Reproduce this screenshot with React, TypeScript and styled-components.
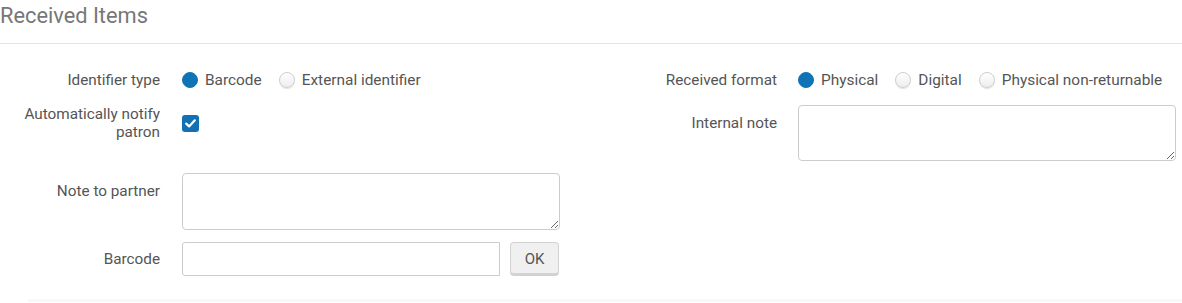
import styled, { createGlobalStyle } from "styled-components";

const GlobalStyle = createGlobalStyle`
  html, body {
    margin: 0;
    padding: 0;
    background: #ffffff;
  }
  body {
    font-family: Roboto, "Liberation Sans", Arial, sans-serif;
    color: #555555;
  }
`;

const Page = styled.div`
  width: 1182px;
  height: 303px;
  overflow: hidden;
`;

const Header = styled.header`
  height: 43px;
  border-bottom: 1px solid #e3e3e3;
  display: flex;
  align-items: center;
`;

const Title = styled.h2`
  margin: 0;
  margin-top: -12px;
  font-size: 21.8px;
  font-weight: 400;
  color: #777777;
`;

const Body = styled.div`
  display: flex;
  padding-top: 19px;
  height: 236px;
`;

const Column = styled.div<{ $width?: number; $label: number; $gap: number }>`
  width: ${({ $width }) => ($width ? `${$width}px` : "auto")};
  flex: ${({ $width }) => ($width ? "none" : "1")};
  display: flex;
  flex-direction: column;
  --label: ${({ $label }) => $label}px;
  --gap: ${({ $gap }) => $gap}px;
`;

const Row = styled.div<{ $top?: number; $align?: string }>`
  display: flex;
  align-items: ${({ $align }) => $align || "center"};
  margin-top: ${({ $top }) => $top || 0}px;
  min-height: 34px;
`;

const Label = styled.label<{ $pad?: number }>`
  width: var(--label);
  flex: none;
  margin-right: var(--gap);
  text-align: right;
  font-size: 15.3px;
  line-height: 18px;
  color: #555555;
  padding-top: ${({ $pad }) => $pad || 0}px;
`;

const RadioGroup = styled.div`
  display: flex;
  align-items: center;
  gap: 17px;
`;

const RadioItem = styled.span`
  display: inline-flex;
  align-items: center;
  gap: 7px;
  font-size: 15.4px;
  color: #555555;
`;

const RadioDot = styled.span<{ $on?: boolean }>`
  width: 16px;
  height: 16px;
  border-radius: 50%;
  box-sizing: border-box;
  background: ${({ $on }) =>
    $on ? "#0f74b6" : "linear-gradient(#ffffff, #ededed)"};
  border: 1px solid ${({ $on }) => ($on ? "#0f74b6" : "#cfcfcf")};
  box-shadow: ${({ $on }) => ($on ? "none" : "0 1px 1px rgba(0,0,0,0.12)")};
`;

const CheckBox = styled.span`
  width: 17px;
  height: 17px;
  border-radius: 3px;
  background: #1270b3;
  display: inline-flex;
  align-items: center;
  justify-content: center;
`;

const TextArea = styled.textarea<{ $width: number; $height: number }>`
  width: ${({ $width }) => $width}px;
  height: ${({ $height }) => $height}px;
  box-sizing: border-box;
  border: 1px solid #cccccc;
  border-radius: 4px;
  margin: 0;
  padding: 6px;
  font-family: inherit;
  font-size: 14px;
  resize: vertical;
  outline: none;
`;

const InputGroup = styled.div`
  display: flex;
  align-items: stretch;
  gap: 10px;
`;

const TextInput = styled.input`
  width: 318px;
  height: 34px;
  box-sizing: border-box;
  border: 1px solid #cccccc;
  border-radius: 3px 0 0 3px;
  margin: 0;
  padding: 0 8px;
  font-family: inherit;
  font-size: 14px;
  outline: none;
`;

const Button = styled.button`
  width: 49px;
  height: 34px;
  box-sizing: border-box;
  margin: 0;
  border: 1px solid #d2d2d2;
  border-bottom: 3px solid #d2d2d2;
  border-radius: 4px;
  background: #f0f0f0;
  color: #555555;
  font-family: inherit;
  font-size: 15px;
  padding: 1px 0 0;
`;

const Footer = styled.div`
  margin-left: 28px;
  height: 3px;
  background: #f8f8f8;
`;

const Check = () => (
  <svg width="11" height="9" viewBox="0 0 11 9">
    <path
      d="M1.2 4.6 L4.1 7.4 L9.8 1.3"
      fill="none"
      stroke="#ffffff"
      strokeWidth="2.2"
      strokeLinecap="round"
      strokeLinejoin="round"
    />
  </svg>
);

const Radio = ({ label, on }: { label: string; on?: boolean }) => (
  <RadioItem>
    <RadioDot $on={on} />
    {label}
  </RadioItem>
);

export default function App() {
  return (
    <Page>
      <GlobalStyle />
      <Header>
        <Title>Received Items</Title>
      </Header>
      <Body>
        <Column $width={591} $label={160} $gap={22}>
          <Row>
            <Label>Identifier type</Label>
            <RadioGroup>
              <Radio label="Barcode" on />
              <Radio label="External identifier" />
            </RadioGroup>
          </Row>
          <Row $top={8}>
            <Label>Automatically notify patron</Label>
            <CheckBox>
              <Check />
            </CheckBox>
          </Row>
          <Row $top={32} $align="flex-start">
            <Label $pad={9}>Note to partner</Label>
            <TextArea $width={378} $height={57} />
          </Row>
          <Row $top={12}>
            <Label>Barcode</Label>
            <InputGroup>
              <TextInput />
              <Button>OK</Button>
            </InputGroup>
          </Row>
        </Column>
        <Column $label={186} $gap={21}>
          <Row>
            <Label>Received format</Label>
            <RadioGroup>
              <Radio label="Physical" on />
              <Radio label="Digital" />
              <Radio label="Physical non-returnable" />
            </RadioGroup>
          </Row>
          <Row $top={8} $align="flex-start">
            <Label $pad={9}>Internal note</Label>
            <TextArea $width={378} $height={56} />
          </Row>
        </Column>
      </Body>
      <Footer />
    </Page>
  );
}
